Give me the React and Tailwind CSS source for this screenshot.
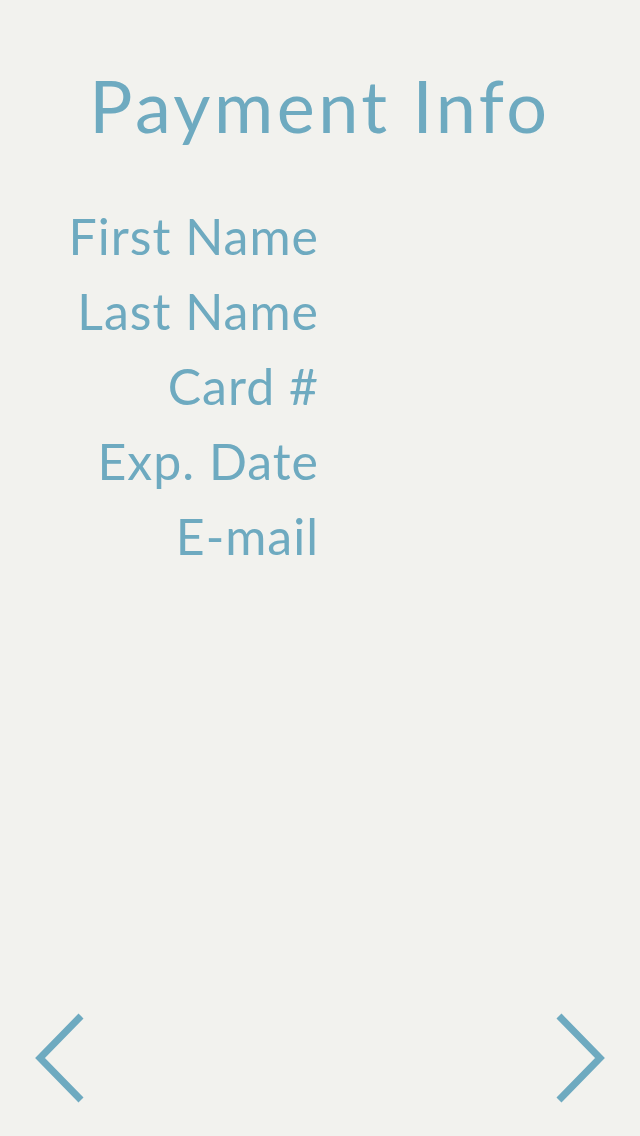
import React from 'react';

const fields = ['First Name', 'Last Name', 'Card #', 'Exp. Date', 'E-mail'];

const Chevron = ({ dir }) => (
    <svg width="80" height="100" viewBox="0 0 80 100" fill="none">
        {dir === 'left' ? (
            <path d="M47 8 L6 50 L47 92" stroke="#6eaac0" strokeWidth="7" strokeLinecap="butt" strokeLinejoin="miter" />
        ) : (
            <path d="M33 8 L74 50 L33 92" stroke="#6eaac0" strokeWidth="7" strokeLinecap="butt" strokeLinejoin="miter" />
        )}
    </svg>
);

const App = () => {
    return (
        <div className="w-[640px] h-[1136px] bg-[#f2f2ee] flex flex-col text-[#6eaac0]" style={{ fontFamily: 'Lato, "Open Sans", sans-serif' }}>
            {/* Title */}
            <h1 className="text-center text-[72px] leading-none font-normal tracking-[3.5px] pt-[69px]">
                Payment Info
            </h1>

            {/* Labels column */}
            <div className="w-[320px] flex flex-col items-end mt-[58px] pr-[1px]">
                {fields.map((f) => (
                    <div key={f} className="text-[50px] leading-[75px] font-normal tracking-[1px]">
                        {f}
                    </div>
                ))}
            </div>

            {/* Nav arrows */}
            <div className="mt-auto flex justify-between px-[34px] pb-[28px]">
                <Chevron dir="left" />
                <Chevron dir="right" />
            </div>
        </div>
    );
};

export default App;
